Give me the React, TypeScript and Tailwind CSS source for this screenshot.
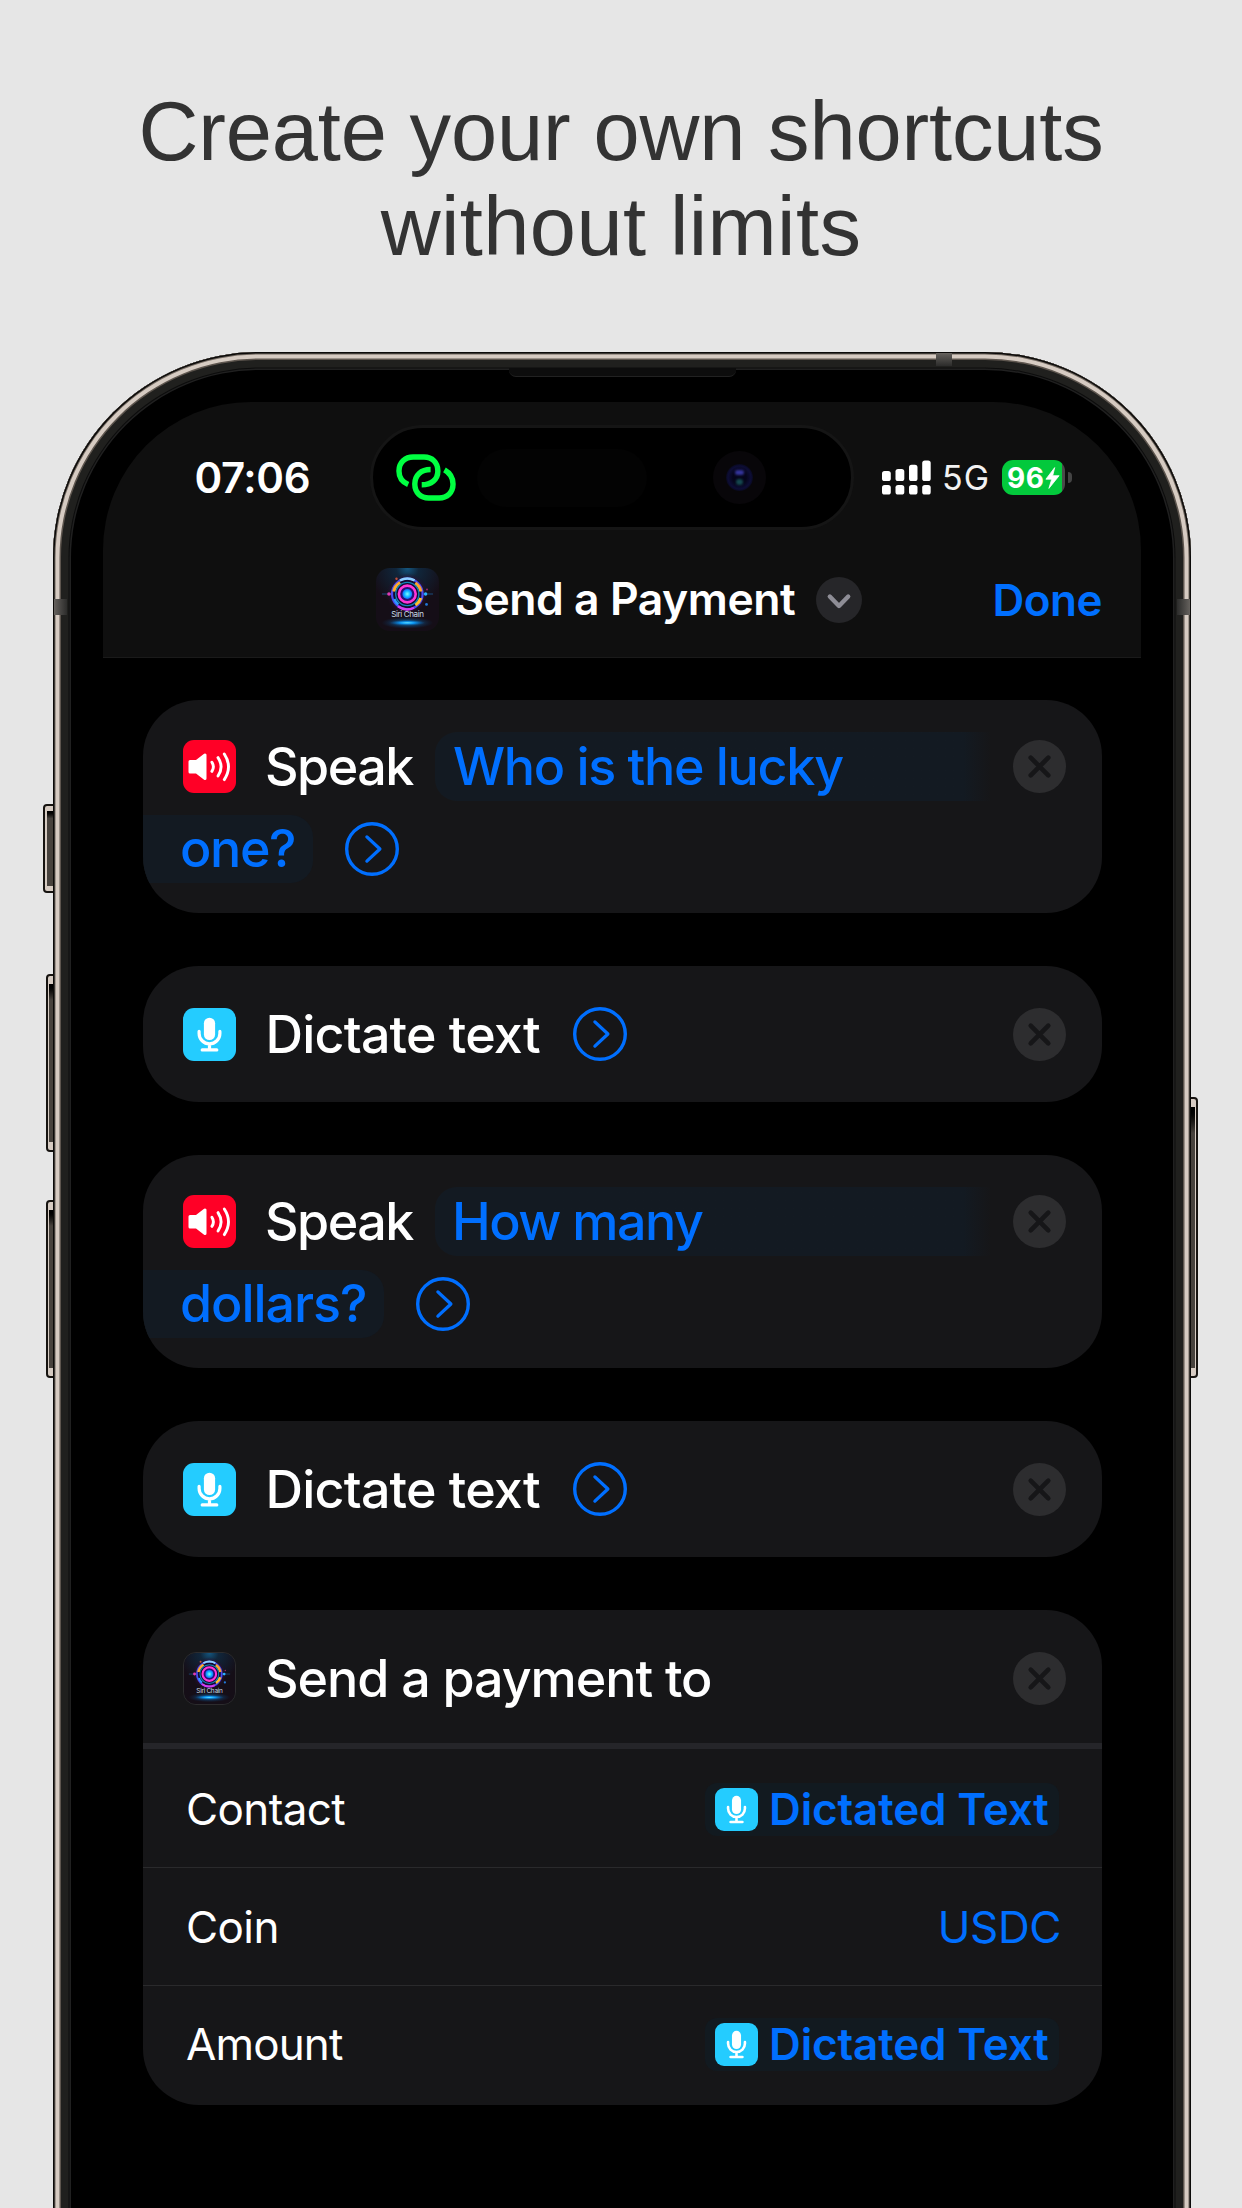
import { useId, type ReactNode } from 'react';

function SiriChainIcon({ className }: { className: string }) {
  const id = useId();
  return (
    <svg viewBox="0 0 63 63" className={className}>
      <defs>
        <radialGradient id={`${id}top`} cx="0.5" cy="0" r="0.6">
          <stop offset="0" stopColor="#14567f" />
          <stop offset="0.3" stopColor="#10263b" />
          <stop offset="1" stopColor="#150e17" />
        </radialGradient>
        <radialGradient id={`${id}glow`}>
          <stop offset="0" stopColor="#5fe0ff" />
          <stop offset="0.4" stopColor="#0b96f5" />
          <stop offset="1" stopColor="#0b4d90" stopOpacity="0" />
        </radialGradient>
        <radialGradient id={`${id}haze`}>
          <stop offset="0" stopColor="#5a1c9c" />
          <stop offset="0.7" stopColor="#3a124f" stopOpacity="0.7" />
          <stop offset="1" stopColor="#200a20" stopOpacity="0" />
        </radialGradient>
        <radialGradient id={`${id}core`}>
          <stop offset="0" stopColor="#7dfcff" />
          <stop offset="0.6" stopColor="#12b4ff" />
          <stop offset="1" stopColor="#1466ff" />
        </radialGradient>
      </defs>
      <rect width="63" height="63" rx="14" fill={`url(#${id}top)`} />
      <circle cx="31.3" cy="26" r="21" fill={`url(#${id}haze)`} />
      <path d="M6 26H57" stroke="#1c5c96" strokeWidth="0.8" />
      <circle cx="31.3" cy="26" r="15.3" fill="#140b30" stroke="#4a49f0" strokeWidth="2.2" />
      <path d="M24 12.4a15.3 15.3 0 0 1 14.6 0" stroke="#8fd0ff" strokeWidth="2.4" fill="none" />
      <path d="M22 38.3a15.3 15.3 0 0 0 16 1.4" stroke="#d63cf0" strokeWidth="2.4" fill="none" />
      <path d="M17.8 23.5a13.6 13.6 0 0 1 6.3-9" stroke="#ffab2c" strokeWidth="3.2" fill="none" />
      <path d="M39.3 15a13.6 13.6 0 0 1 5.6 8.5" stroke="#ffa22a" strokeWidth="3.2" fill="none" />
      <path d="M44.8 30a13.6 13.6 0 0 1-5.4 7" stroke="#ffbf2a" strokeWidth="3.2" fill="none" />
      <path d="M18.3 31a14 14 0 0 0 4 5.6" stroke="#2b9bff" strokeWidth="2.4" fill="none" />
      <circle cx="31.3" cy="26" r="11.6" fill="none" stroke="#1286ba" strokeWidth="1.3" />
      <circle cx="31.3" cy="26" r="8.4" fill="#2a0f75" stroke="#ff35d8" strokeWidth="2.6" />
      <circle cx="31.3" cy="26" r="4.9" fill={`url(#${id}core)`} />
      <circle cx="13" cy="26" r="1.8" fill="#e23bb4" />
      <circle cx="49.600" cy="26" r="1.7" fill="#2bb4ff" />
      <circle cx="20.5" cy="10.8" r="1.2" fill="#c4503a" />
      <circle cx="50.5" cy="36.4" r="1.4" fill="#2277d8" />
      <circle cx="51" cy="21.5" r="0.9" fill="#a8286e" />
      <ellipse cx="31.3" cy="54.8" rx="26" ry="6" fill={`url(#${id}glow)`} opacity="0.4" />
      <ellipse cx="31.3" cy="54.8" rx="18" ry="2.8" fill={`url(#${id}glow)`} />
      <text x="31.4" y="49" textAnchor="middle" fontSize="8" letterSpacing="-0.38" fill="#c9dbe8" fontFamily="Inter, sans-serif">
        Siri Chain
      </text>
    </svg>
  );
}

function SpeakerIcon() {
  return (
    <svg viewBox="0 0 53 53" className="h-[53px] w-[53px] shrink-0 rounded-[11px] bg-[#ff0026]">
      <path d="M7 21.5h6.6l8.4-6.5v23.6l-8.4-6.5H7z" fill="#fff" stroke="#fff" strokeWidth="3" strokeLinejoin="round" />
      <path
        d="M28.9 22.2q3 4.6 0 9.2M35 17.6q6.2 9.2 0 18.4M41.3 14q8.4 12.8 0 25.6"
        fill="none"
        stroke="#fff"
        strokeWidth="2.9"
        strokeLinecap="round"
      />
    </svg>
  );
}

function MicIcon({ className }: { className: string }) {
  return (
    <svg viewBox="0 0 53 53" className={className}>
      <rect x="20.9" y="9.7" width="11.2" height="22.4" rx="5.6" fill="#fff" />
      <path
        d="M16.1 23.4v2a10.4 10.4 0 0 0 20.8 0v-2M26.5 36.4v5M19.2 41.9h14.6"
        fill="none"
        stroke="#fff"
        strokeWidth="3.2"
        strokeLinecap="round"
      />
    </svg>
  );
}

const ChevronCircle = () => (
  <svg viewBox="0 0 54 54" className="h-[54px] w-[54px] shrink-0" fill="none" stroke="#006fff">
    <circle cx="27" cy="27" r="25.3" strokeWidth="3.4" />
    <path d="M21.9 14.9l13 12.1-13 12.1" strokeWidth="3.3" strokeLinecap="round" strokeLinejoin="round" />
  </svg>
);

const CloseButton = () => (
  <button className="mr-[36px] ml-auto shrink-0">
    <svg viewBox="0 0 53 53" className="h-[53px] w-[53px]">
      <circle cx="26.5" cy="26.5" r="26.5" fill="#2d2d2f" />
      <path d="M17.7 17.7l17.6 17.6M35.3 17.7L17.7 35.3" stroke="#161618" strokeWidth="4.6" strokeLinecap="round" />
    </svg>
  </button>
);

const Card = ({ children, className }: { children: ReactNode; className: string }) => (
  <section className={`flex w-[959px] shrink-0 flex-col overflow-hidden rounded-[56px] bg-[#161618] ${className}`}>{children}</section>
);

function SpeakCard({ first, firstClass, second, secondClass }: { first: string; firstClass: string; second: string; secondClass: string }) {
  return (
    <Card className="h-[213px] pt-[25.5px] text-[52px] leading-none font-medium">
      <div className="flex h-[82px] items-center pl-[39.5px]">
        <SpeakerIcon />
        <span className="ml-[29.5px] w-[170px] pt-px tracking-[-1.5px] text-white">Speak</span>
        <span className={`flex h-[69px] w-[556px] items-center rounded-l-[22px] bg-linear-to-r from-[#131a22] from-95% to-[#161618] text-[#006fff] ${firstClass}`}>
          {first}
        </span>
        <CloseButton />
      </div>
      <div className="flex h-[82px] items-center">
        <span className={`mr-[32px] flex h-[68px] items-center rounded-r-[22px] bg-[#131a22] pl-[37px] text-[#006fff] ${secondClass}`}>{second}</span>
        <ChevronCircle />
      </div>
    </Card>
  );
}

const DictateCard = () => (
  <Card className="h-[136px]">
    <div className="flex h-full items-center pl-[39.5px]">
      <MicIcon className="h-[53px] w-[53px] shrink-0 rounded-[11px] bg-[#24ccff]" />
      <span className="ml-[30px] w-[307.5px] pt-px text-[52px] leading-none font-medium tracking-[-0.8px] text-white">Dictate text</span>
      <ChevronCircle />
      <CloseButton />
    </div>
  </Card>
);

const DictatedChip = () => (
  <span className="mr-[43px] ml-auto flex h-[53px] w-[354px] items-center rounded-[12px] bg-[#121a20] pl-[10px] text-[44px] leading-none font-semibold tracking-[-0.15px] text-[#006fff]">
    <MicIcon className="mr-[11px] h-[43px] w-[43px] shrink-0 rounded-[9px] bg-[#24ccff]" />
    Dictated Text
  </span>
);

function SideButton({ className }: { className: string }) {
  return (
    <div className={`absolute border-2 border-[#161310] bg-[#d6cbc2] ${className}`}>
      <div className="h-full w-full bg-linear-to-b from-black via-[#47423d] via-10% to-[#47423d]" />
    </div>
  );
}

function StatusBar() {
  return (
    <div className="mt-[23px] flex h-[105px] items-center pl-[91.5px]">
      <span className="w-[175.500px] text-[42px] leading-none font-semibold tracking-[-0.4px] text-white">07:06</span>
      <div className="relative flex h-[105px] w-[484px] items-center rounded-full border-[3.5px] border-[#151515] bg-black pl-[22.5px]">
        <svg viewBox="0 0 182 142" className="h-[47px] w-[60px]" fill="none" stroke="#00ff41" strokeWidth="16.5">
          <path d="M37 92C18 84 9 71 9 51C9 25 28 9 52 9H85C110 9 127 26 127 51C127 77 107 93 78 93" />
          <path d="M105 47C76 47 57 64 57 91C57 117 75 133 99 133H131C155 133 173 117 173 91C173 72 165 58 147 48" />
        </svg>
        <div className="ml-[21px] h-[58px] w-[170px] rounded-full bg-[#030303]" />
        <div className="ml-[66px] flex h-[53px] w-[53px] items-center justify-center rounded-full bg-[#080609]">
          <div className="flex h-[27px] w-[27px] flex-col items-center justify-center gap-[4px] rounded-full bg-[radial-gradient(circle,#05051a_35%,#0d0d36_60%,#070712_75%)]">
            <div className="h-[5px] w-[9px] rounded-full bg-[#34349a] blur-[1px]" />
            <div className="h-[6px] w-[7px] rounded-full bg-[#15474f] blur-[1px]" />
          </div>
        </div>
      </div>
      <svg viewBox="0 0 49 35" className="ml-[28px] h-[35px] w-[49px]" fill="#fff">
        <rect x="0" y="11" width="8.8" height="10" rx="2.6" />
        <rect x="13.5" y="9" width="8.8" height="12" rx="2.6" />
        <rect x="27" y="4.8" width="8.5" height="16.2" rx="2.6" />
        <rect x="40.2" y="0.5" width="8.5" height="20.5" rx="2.6" />
        <rect x="0" y="25" width="8.8" height="9.6" rx="2.6" />
        <rect x="13.5" y="25" width="8.8" height="9.6" rx="2.6" />
        <rect x="27" y="25" width="8.5" height="9.6" rx="2.6" />
        <rect x="40.2" y="25" width="8.5" height="9.6" rx="2.6" />
      </svg>
      <span className="ml-[11px] w-[60px] pt-px text-[34px] leading-none tracking-[1px] text-[#f2f2f2]">5G</span>
      <div className="flex h-[35px] w-[63px] items-center rounded-[11px] bg-[#03c93c] bg-linear-to-r from-[#03c93c] from-96% to-[#4a4a4a] to-96% pl-[5px] text-[28px] leading-none font-bold tracking-[0.6px] text-white">
        96
        <svg viewBox="45 7 14 22" className="h-[22px] w-[15px] shrink-0" fill="#fff" stroke="#fff" strokeWidth="0.8" strokeLinejoin="round">
          <path d="M54.2 7.6L45.400 19.200h5.800L48.400 28.400L58.600 15.700H52.200z" />
        </svg>
      </div>
      <div className="ml-[3px] h-[11px] w-[4px] rounded-r-full bg-[#444]" />
    </div>
  );
}

function TitleBar() {
  return (
    <div className="mt-[37px] flex h-[64px] items-center pl-[272.5px]">
      <SiriChainIcon className="h-[63px] w-[63px] shrink-0" />
      <span className="ml-[16.5px] w-[361px] pt-px text-[44.5px] leading-none font-semibold tracking-[-0.47px] whitespace-nowrap text-white">Send a Payment</span>
      <svg viewBox="0 0 46 46" className="mt-px h-[46px] w-[46px]" fill="none">
        <circle cx="23" cy="23" r="23" fill="#262629" />
        <path d="M13.8 19.5L23 29l9.2-9.5" stroke="#8e8d96" strokeWidth="4.4" strokeLinecap="round" strokeLinejoin="round" />
      </svg>
      <button className="ml-[130.5px] pt-px text-[44px] leading-none font-semibold tracking-[-0.5px] text-[#006fff]">Done</button>
    </div>
  );
}

export default function App() {
  return (
    <main className="h-[2208px] w-[1242px] overflow-hidden bg-[#e6e6e6] font-['Inter',sans-serif]">
      <h1 className="h-[352px] pt-[84px] text-center font-['Liberation_Sans',sans-serif] text-[83px] leading-[95px] font-normal text-[#333]">
        <span className="tracking-[-0.15px]">Create your own shortcuts</span>
        <br />
        <span className="tracking-[0.4px]">without limits</span>
      </h1>

      <div className="relative ml-[53px] h-[1900px] w-[1138px]">
        <SideButton className="top-[452px] left-[-10px] h-[89px] w-[12px] rounded-l-[4px] py-[5px] pl-[2px]" />
        <SideButton className="top-[622px] left-[-7.5px] h-[178px] w-[10px] rounded-l-[4px] py-[8px] pl-px" />
        <SideButton className="top-[848px] left-[-7.5px] h-[178px] w-[10px] rounded-l-[4px] py-[8px] pl-px" />
        <SideButton className="top-[745px] right-[-7px] h-[281px] w-[10px] rounded-r-[4px] py-[8px] pr-px" />

        <div className="relative h-full rounded-t-[206px] bg-black pt-[50px] pl-[50px] shadow-[inset_0_0_0_1.5px_#0b0a09,inset_0_0_0_2.5px_#6f665e,inset_0_0_0_6.5px_#d6cbc2,inset_0_0_0_8px_#5d554e,inset_0_0_0_15.5px_#20201e,inset_0_0_0_16.5px_#0c0c0c,inset_0_0_0_18px_#202020]">
          <div className="absolute top-[247px] left-[1px] h-[16px] w-[13px] bg-linear-to-r from-[#66625e] to-[#2c2c2b]" />
          <div className="absolute top-[247px] right-[1px] h-[16px] w-[13px] bg-linear-to-l from-[#66625e] to-[#2c2c2b]" />
          <div className="absolute top-[1px] left-[883px] h-[13px] w-[16px] bg-linear-to-b from-[#66625e] to-[#2c2c2b]" />
          <div className="absolute top-[16px] left-[456px] h-[9px] w-[227px] rounded-b-[7px] border-b border-[#222] bg-[#0d0d0d]" />

          <div className="flex h-[256px] w-[1038px] flex-col rounded-t-[148px] border-b border-[#1a1a1a] bg-[#0f0f0f]">
            <StatusBar />
            <TitleBar />
          </div>

          <div className="flex flex-col gap-[53px] pt-[42px] pl-[40px]">
            <SpeakCard
              first="Who is the lucky"
              firstClass="pl-[18px] tracking-[-1.3px]"
              second="one?"
              secondClass="w-[170px] tracking-[-1.4px]"
            />
            <DictateCard />
            <SpeakCard
              first="How many"
              firstClass="pl-[17px] tracking-[-1.5px]"
              second="dollars?"
              secondClass="w-[241px] tracking-[-1.06px]"
            />
            <DictateCard />
            <Card className="h-[495px]">
              <div className="flex h-[133px] shrink-0 items-center pt-[3px] pl-[39.5px]">
                <SiriChainIcon className="h-[53px] w-[53px] shrink-0 rounded-[13px] border border-[#2c2c2e]" />
                <span className="ml-[29.5px] pt-px text-[52px] leading-none font-medium tracking-[-1.05px] text-white">Send a payment to</span>
                <CloseButton />
              </div>
              <div className="h-[6px] shrink-0 bg-[#252529]" />
              <div className="flex h-[119px] shrink-0 items-center border-b border-[#2a2a2c] pt-[2px] pl-[43px] text-[44px] leading-none text-white">
                <span className="tracking-[-0.6px]">Contact</span>
                <DictatedChip />
              </div>
              <div className="flex h-[118px] shrink-0 items-center border-b border-[#2a2a2c] pl-[43px] text-[44px] leading-none text-white">
                <span className="tracking-[-0.6px]">Coin</span>
                <span className="mr-[41px] ml-auto tracking-[-0.4px] text-[#006fff]">USDC</span>
              </div>
              <div className="flex h-[118px] shrink-0 items-center pb-[2px] pl-[43px] text-[44px] leading-none text-white">
                <span className="tracking-[-0.86px]">Amount</span>
                <DictatedChip />
              </div>
            </Card>
          </div>
        </div>
      </div>
    </main>
  );
}
